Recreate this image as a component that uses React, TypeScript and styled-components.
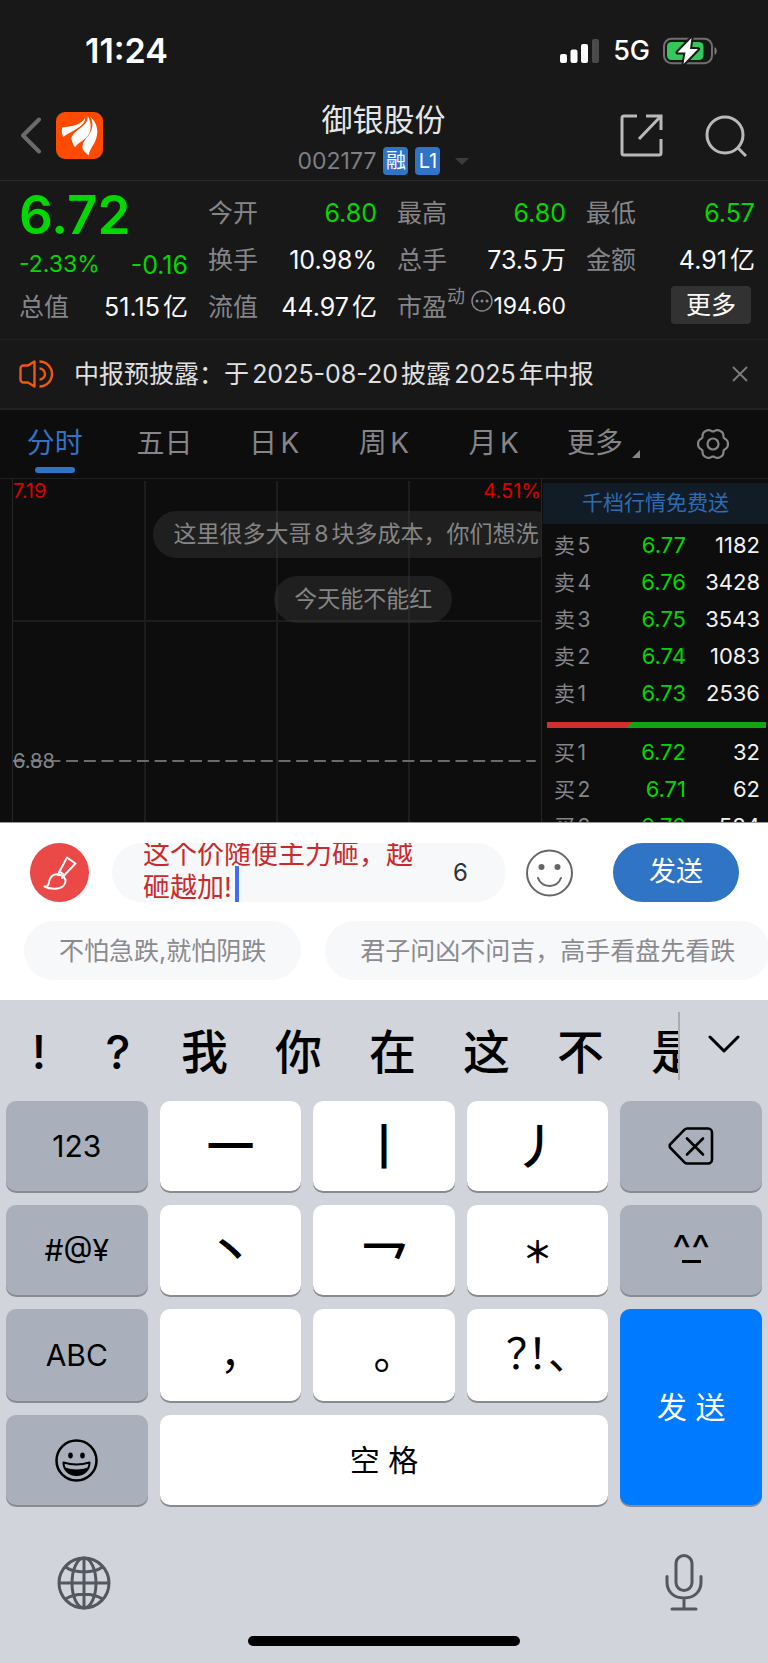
import React, { useState } from "react";
import styled, { createGlobalStyle } from "styled-components";

const GlobalStyle = createGlobalStyle`
  *, *::before, *::after { box-sizing: border-box; }
  body {
    margin: 0;
    background: #0d0d0d;
    font-family: Inter, "Noto Sans CJK SC", sans-serif;
    line-height: 1.2;
    text-autospace: normal;
  }
  button, textarea { font: inherit; color: inherit; border: 0; padding: 0; margin: 0; background: none; }
  button { cursor: pointer; }
  a { color: inherit; text-decoration: none; }
  svg { display: block; flex: none; }
`;

const Screen = styled.div`
  display: flex;
  flex-direction: column;
  min-height: 100vh;
  color: #f2f2f2;
  white-space: nowrap;
`;

/* ---------- status bar ---------- */
const StatusBar = styled.div`
  display: flex;
  align-items: center;
  justify-content: space-between;
  height: 102px;
  padding: 0 50px 0 85px;
  background: #181818;
  color: #fff;
`;
const Clock = styled.time`
  font-size: 34px;
  font-weight: 600;
`;
const StatusIcons = styled.div`
  display: flex;
  align-items: center;
  gap: 13px;
  font-size: 27px;
  font-weight: 500;
`;

/* ---------- navigation ---------- */
const Nav = styled.header`
  display: grid;
  grid-template-columns: 1fr auto 1fr;
  padding: 0 21px 5px 20px;
  background: #181818;
  border-bottom: 1px solid #2a2a2a;
`;
const NavSide = styled.div<{ $end?: boolean }>`
  display: flex;
  align-items: center;
  justify-content: ${(p) => (p.$end ? "flex-end" : "flex-start")};
  gap: ${(p) => (p.$end ? 42 : 14)}px;
  height: 67px;
`;
const TitleBlock = styled.div`
  display: flex;
  flex-direction: column;
  align-items: center;
  gap: 9px;
`;
const StockName = styled.h1`
  margin: 0;
  font-size: 31px;
  line-height: 36px;
  font-weight: 400;
  color: #e6e6e6;
`;
const CodeLine = styled.div`
  display: flex;
  align-items: center;
  gap: 7px;
  font-size: 23px;
  line-height: 28px;
  color: #7f7f85;
`;
const Badge = styled.span`
  display: grid;
  place-items: center;
  width: 25px;
  height: 28px;
  border-radius: 4px;
  background: #2f74c5;
  color: #fff;
  font-size: 20px;
`;
const Caret = styled.i`
  margin-left: 8px;
  border: 7px solid transparent;
  border-top-color: #3c3c3c;
  border-bottom: 0;
`;

/* ---------- key figures ---------- */
const Figures = styled.section`
  display: grid;
  grid-template-columns: repeat(4, 1fr);
  grid-auto-rows: 47px;
  column-gap: 20px;
  padding: 8px 13px 9px 19px;
  background: #181818;
  border-bottom: 1px solid #222;
`;
const Figure = styled.div`
  display: flex;
  align-items: center;
  justify-content: space-between;
  font-size: 25px;
  color: #fafafa;
`;
const FigureLabel = styled.span`
  display: flex;
  align-items: center;
  color: #85858a;
`;
const Sup = styled.sup`
  align-self: flex-start;
  font-size: 18px;
  line-height: 10px;
`;
const Hint = styled.button`
  align-self: flex-start;
  margin: 7px 0 0 auto;
`;
const Down = styled.span`
  color: #00d800;
`;
const Price = styled.strong`
  padding-top: 4px;
  font-size: 53px;
  font-weight: 600;
  line-height: 54px;
  color: #00d800;
`;
const ChangeRow = styled(Figure)`
  padding-top: 11px;
  color: #00d800;
`;
const Percent = styled.span`
  font-size: 23px;
`;
const MoreButton = styled.button`
  width: 80px;
  height: 38px;
  margin: 0 4px 4px auto;
  border-radius: 4px;
  background: #323232;
  font-size: 25px;
  line-height: 38px;
`;

/* ---------- notice ---------- */
const Notice = styled.div`
  display: flex;
  align-items: center;
  height: 70px;
  padding: 0 20px 0 19px;
  background: #181818;
  border-bottom: 2px solid #222;
  font-size: 25px;
  color: #e0e0e0;
`;
const NoticeText = styled.span`
  flex: 1;
  padding-left: 20px;
`;

/* ---------- tabs ---------- */
const Tabs = styled.nav`
  display: grid;
  grid-template-columns: repeat(7, 1fr);
  height: 69px;
  border-bottom: 1px solid #1f1f1f;
  background: #0d0d0d;
`;
const Tab = styled.button<{ $active?: boolean }>`
  position: relative;
  display: flex;
  align-items: center;
  justify-content: center;
  font-size: 28px;
  color: ${(p) => (p.$active ? "#2f74c5" : "#85858a")};
  &::after {
    content: "";
    position: absolute;
    bottom: 5px;
    width: 40px;
    height: 6px;
    border-radius: 3px;
    background: ${(p) => (p.$active ? "#2f74c5" : "transparent")};
  }
`;
const Corner = styled.i`
  align-self: flex-end;
  margin: 0 0 20px 9px;
  border: 4px solid #85858a;
  border-top-color: transparent;
  border-left-color: transparent;
`;

/* ---------- chart and order book ---------- */
const Market = styled.main`
  display: grid;
  grid-template-columns: 542fr 226fr;
  flex: 1 1 0;
  min-height: 320px;
  height: 0;
  overflow: hidden;
  background: #0d0d0d;
`;
const Chart = styled.section`
  position: relative;
  margin-left: 12px;
  overflow: hidden;
  border-left: 1px solid #262626;
  border-right: 1px solid #262626;
`;
const Plot = styled.svg`
  position: absolute;
  inset: 0;
  width: 100%;
  height: 100%;
`;
const AxisLabel = styled.span<{ $top: number; $right?: boolean; $up?: boolean }>`
  position: absolute;
  top: ${(p) => p.$top}px;
  ${(p) => (p.$right ? "right: 0;" : "left: 0;")}
  font-size: 20px;
  line-height: 24px;
  color: ${(p) => (p.$up ? "#de0000" : "#85858a")};
`;
const Bullets = styled.div`
  position: absolute;
  inset: 32px 0 auto 0;
  display: flex;
  flex-direction: column;
  align-items: flex-start;
  gap: 18px;
`;
const Bullet = styled.p<{ $indent: number }>`
  margin: 0 0 0 ${(p) => p.$indent}%;
  padding: 0 20px;
  border-radius: 24px;
  background: rgba(60, 60, 60, 0.4);
  font-size: 23px;
  line-height: 47px;
  color: #858585;
`;
const Book = styled.aside`
  padding: 4px 0 0 1px;
  overflow: hidden;
`;
const Promo = styled.a`
  display: block;
  margin-bottom: 3px;
  padding-bottom: 2px;
  background: #121c27;
  color: #2e6bb3;
  font-size: 21px;
  line-height: 39px;
  text-align: center;
`;
const Depth = styled.table`
  width: 100%;
  border-collapse: collapse;
  font-size: 22px;
  line-height: 37px;
`;
const Level = styled.th`
  width: 50px;
  padding: 0 0 0 11px;
  font-size: 21px;
  font-weight: 400;
  text-align: left;
  color: #85858a;
`;
const PriceCell = styled.td`
  padding: 0;
  text-align: right;
  color: #00d800;
`;
const Volume = styled.td`
  width: 82px;
  padding: 0 8px 0 0;
  text-align: right;
`;
const Balance = styled.div`
  height: 6px;
  margin: 10px 2px 6px 4px;
  background: linear-gradient(135deg, #cf2f2f 38%, #14a514 38%);
`;

/* ---------- comment composer ---------- */
const Composer = styled.section`
  padding: 20px 0;
  border-top: 1px solid #999;
  background: #fff;
`;
const ComposeRow = styled.form`
  display: flex;
  align-items: center;
  padding: 0 29px 0 30px;
`;
const BrushButton = styled.button`
  display: grid;
  place-items: center;
  width: 59px;
  height: 59px;
  border-radius: 50%;
  background: #eb4848;
`;
const Field = styled.div`
  position: relative;
  display: flex;
  align-items: flex-end;
  flex: 1;
  height: 59px;
  margin: 0 20px 0 23px;
  padding: 0 38px 0 31px;
  border-radius: 30px;
  background: #f7f8fa;
  overflow: hidden;
`;
const CommentInput = styled.textarea`
  flex: 1;
  min-width: 0;
  height: 64px;
  padding-right: 30px;
  font-size: 27px;
  line-height: 33px;
  color: #cc2a2a;
  resize: none;
  outline: 0;
  overflow: hidden;
  white-space: pre-wrap;
`;
const TextCaret = styled.i`
  position: absolute;
  left: 123px;
  bottom: 0;
  width: 4px;
  height: 36px;
  background: #3f6ff0;
`;
const Counter = styled.output`
  font-size: 24px;
  line-height: 59px;
  color: #333;
`;
const SendButton = styled.button`
  width: 126px;
  height: 59px;
  margin-left: 40px;
  border-radius: 30px;
  background: #2f74c5;
  color: #fff;
  font-size: 27px;
`;
const Phrases = styled.div`
  display: flex;
  gap: 24px;
  margin-top: 19px;
  padding-left: 24px;
  overflow: hidden;
`;
const Phrase = styled.button`
  flex: none;
  height: 59px;
  padding: 0 35px;
  border-radius: 30px;
  background: #f7f8fa;
  color: #8a8a8f;
  font-size: 25px;
`;

/* ---------- keyboard ---------- */
const Keyboard = styled.section`
  padding: 0 6px 17px;
  background: #d1d4db;
  color: #000;
`;
const CandidateBar = styled.div`
  display: flex;
  align-items: flex-start;
  height: 101px;
  margin: 0 -6px;
  padding-top: 12px;
`;
const Candidates = styled.div`
  display: flex;
  flex: 1;
  padding-top: 6px;
  overflow: hidden;
`;
const Candidate = styled.button`
  flex: none;
  min-width: 79px;
  padding: 0 24px 0 23px;
  font-size: 47px;
  font-weight: 500;
  line-height: 68px;
`;
const Expand = styled.button`
  display: grid;
  justify-content: center;
  align-content: center;
  width: 90px;
  height: 68px;
  padding-bottom: 4px;
  border-left: 2px solid #a9abb1;
`;
const Keys = styled.div`
  display: grid;
  grid-template-columns: repeat(5, 1fr);
  grid-template-rows: 90px 90px 92px 90px;
  gap: 14px 12px;
`;
type KeyKind = "plain" | "grey" | "blue";
const keyFill: Record<KeyKind, string> = { plain: "#fff", grey: "#a9afbb", blue: "#007aff" };
const Key = styled.button<{ $kind?: KeyKind; $cols?: number; $rows?: number }>`
  display: flex;
  flex-direction: column;
  align-items: center;
  justify-content: center;
  grid-column: span ${(p) => p.$cols ?? 1};
  grid-row: span ${(p) => p.$rows ?? 1};
  border-radius: 10px;
  background: ${(p) => keyFill[p.$kind ?? "plain"]};
  box-shadow: 0 2px 0 #898b90;
  color: ${(p) => (p.$kind === "blue" ? "#fff" : "#000")};
  font-size: 30px;
`;
const StrokeKey = styled(Key)<{ $low?: boolean }>`
  padding: ${(p) => (p.$low ? "20px 0 0" : "0 0 6px")};
  font-family: "Noto Sans CJK SC", sans-serif;
  font-size: 48px;
  font-weight: 500;
  line-height: 60px;
`;
const StarKey = styled(Key)`
  font-family: "Noto Sans CJK SC", sans-serif;
  font-weight: 700;
`;
const PunctKey = styled(Key)`
  padding-bottom: 8px;
  font-family: "Noto Sans CJK SC", sans-serif;
  font-feature-settings: "halt";
  font-size: 42px;
  line-height: 60px;
`;
const FaceKey = styled(Key)`
  font-size: 40px;
  line-height: 22px;
  &::after {
    content: "";
    width: 19px;
    height: 3px;
    background: #000;
  }
`;
const BottomRow = styled.div`
  display: flex;
  align-items: center;
  justify-content: space-between;
  padding: 49px 59px 0 51px;
`;
const HomeBar = styled.div`
  width: 36%;
  height: 10px;
  margin: 25px auto 0;
  border-radius: 5px;
  background: #000;
`;

/* ---------- icons ---------- */
const Signal = () => (
  <svg width="40" height="24" viewBox="0 0 40 24" fill="#fff" aria-label="信号">
    <rect x="0" y="15" width="7" height="9" rx="2" />
    <rect x="10.5" y="10.5" width="7" height="13.5" rx="2" />
    <rect x="21" y="5" width="7" height="19" rx="2" />
    <rect x="32" y="0" width="7" height="24" rx="2" fill="#4a4a4a" />
  </svg>
);
const Battery = () => (
  <svg width="55" height="28" viewBox="0 0 55 28" aria-label="充电中">
    <rect x="1" y="1.8" width="48" height="24.4" rx="7.5" fill="none" stroke="#6f6f6f" strokeWidth="2" />
    <path d="M51.5 10v8c3-1.200 3-6.800 0-8z" fill="#7c7c7c" />
    <rect x="4" y="5" width="36.500" height="18" rx="4.500" fill="#34c759" />
    <path d="M28.500 1 14.500 15.500h8L20.500 27l14.500-15h-8z" fill="#fff" stroke="#181818" strokeWidth="4" strokeLinejoin="round" paintOrder="stroke" />
  </svg>
);
const Back = () => (
  <svg width="22" height="37" viewBox="0 0 22 37" fill="none" stroke="#6b6b6b" strokeWidth="4" strokeLinecap="round" strokeLinejoin="round">
    <path d="M19 2.500 3 18.500l16 16" />
  </svg>
);
const Logo = () => (
  <svg width="47" height="47" viewBox="0 0 141 141" fill="#fff">
    <rect width="141" height="141" rx="27" fill="#ff4a00" />
    <path d="M19 46C48 45 78 38 88 16C88 42 60 50 22 74C17 67 16 56 19 46Z" />
    <path d="M95 12C97 45 55 50 46 79C48 90 52 99 57 106C70 86 103 82 104 45C104 32 101 21 95 12Z" />
    <path d="M103 14C113 32 111 52 97 71C84 86 78 95 80 111C85 119 91 125 98 130C101 107 124 93 124 58C123 38 115 25 103 14Z" />
  </svg>
);
const Share = () => (
  <svg width="43" height="43" viewBox="0 0 43 43" fill="none" stroke="#b9b9b9" strokeWidth="3">
    <path d="M17 2H4a2 2 0 0 0-2 2v35a2 2 0 0 0 2 2h35a2 2 0 0 0 2-2V25M26 2h15v14M41 2 19 25" />
  </svg>
);
const Search = () => (
  <svg width="42" height="42" viewBox="0 0 42 42" fill="none" stroke="#b9b9b9" strokeWidth="3">
    <circle cx="20" cy="20" r="18" />
    <path d="m32 32 9 9" />
  </svg>
);
const Ellipsis = () => (
  <svg width="22" height="22" viewBox="0 0 22 22" fill="#85858a">
    <circle cx="11" cy="11" r="10" fill="none" stroke="#85858a" strokeWidth="1.500" />
    <circle cx="6" cy="11" r="1.500" /><circle cx="11" cy="11" r="1.500" /><circle cx="16" cy="11" r="1.500" />
  </svg>
);
const Speaker = () => (
  <svg width="35" height="30" viewBox="0 0 35 30" fill="none" stroke="#ee5a0c" strokeWidth="2.400" strokeLinejoin="round">
    <path d="M15.500 2.500v25l-6.500-4H4.500a3 3 0 0 1-3-3v-11a3 3 0 0 1 3-3H9z" />
    <path d="M20.500 2.500a12.500 12.500 0 0 1 0 25M20.500 9.500a5.500 5.500 0 0 1 0 11" />
  </svg>
);
const Close = () => (
  <svg width="16" height="16" viewBox="0 0 16 16" stroke="#7d7d7d" strokeWidth="1.800">
    <path d="m1 1 14 14M15 1 1 15" />
  </svg>
);
const gearOutline =
  Array.from({ length: 120 }, (_, i) => {
    const a = (i * Math.PI) / 60;
    const r = 14 + 1.2 * Math.cos(6 * a) - 0.3 * Math.cos(12 * a);
    return `${i ? "L" : "M"}${(17 + r * Math.cos(a)).toFixed(2)} ${(17 + r * Math.sin(a)).toFixed(2)}`;
  }).join("") + "Z";
const Gear = () => (
  <svg width="34" height="34" viewBox="0 0 34 34" fill="none" stroke="#85858a" strokeWidth="2.200">
    <path d={gearOutline} strokeLinejoin="round" />
    <circle cx="17" cy="17" r="5.500" />
  </svg>
);
const Brush = () => (
  <svg width="34" height="34" viewBox="0 0 34 34" fill="none" stroke="#fff" strokeWidth="2" strokeLinejoin="round" strokeLinecap="round">
    <path d="M24 1.500 32.500 7.500 21.500 19 16.500 15.500z" />
    <path d="M16.500 15.500 15 19M21.500 19l-2.500 3" />
    <path d="M15 18.500c-6-1-8.500 4-9 8-.3 2.500-1.500 4-4.500 4 7 3.500 20 3.500 21-5 .3-3.500-3-6.500-7.500-7z" />
  </svg>
);
const Smile = () => (
  <svg width="47" height="48" viewBox="0 0 47 48" fill="none" stroke="#666" strokeWidth="2">
    <circle cx="23.500" cy="24" r="22.500" />
    <path d="M12 29c4 10.500 19 10.500 23 0" strokeLinecap="round" />
    <circle cx="15.500" cy="18" r="3" fill="#666" stroke="none" />
    <circle cx="31.500" cy="18" r="3" fill="#666" stroke="none" />
  </svg>
);
const ChevronDown = () => (
  <svg width="32" height="18" viewBox="0 0 32 18" fill="none" stroke="#000" strokeWidth="3" strokeLinecap="round" strokeLinejoin="round">
    <path d="m2 2 14 14L30 2" />
  </svg>
);
const Backspace = () => (
  <svg width="46" height="38" viewBox="0 0 46 38" fill="none" stroke="#000" strokeWidth="2.600" strokeLinecap="round" strokeLinejoin="round">
    <path d="M19.500 1.500H40a4 4 0 0 1 4 4v27a4 4 0 0 1-4 4H19.500a4 4 0 0 1-3-1.200L2.500 21a2.800 2.800 0 0 1 0-4L16.500 2.700a4 4 0 0 1 3-1.200z" />
    <path d="m19 11.500 16 16M35 11.500l-16 16" />
  </svg>
);
const Grin = () => (
  <svg width="43" height="43" viewBox="0 0 43 43" fill="none" stroke="#000" strokeWidth="2.500">
    <circle cx="21.500" cy="21.500" r="20" />
    <ellipse cx="15.500" cy="16.500" rx="2.300" ry="3" fill="#000" stroke="none" />
    <ellipse cx="27.500" cy="16.500" rx="2.300" ry="3" fill="#000" stroke="none" />
    <path d="M8.500 23.500c8 2.500 18 2.500 26 0 0 7-5 12.500-13 12.500S8.500 30.500 8.500 23.500z" strokeWidth="2" strokeLinejoin="round" />
    <path d="M10 28.500c7 2.500 16 2.500 23 0-2 5-6 7.500-11.500 7.500S12 33.500 10 28.500z" fill="#000" stroke="none" />
  </svg>
);
const Globe = () => (
  <svg width="54" height="54" viewBox="0 0 54 54" fill="none" stroke="#53575f" strokeWidth="3">
    <circle cx="27" cy="27" r="25" />
    <ellipse cx="27" cy="27" rx="12" ry="25" />
    <path d="M27 2v50M2 27h50M8.500 11c9 6.500 28 6.500 37 0M8.500 43c9-6.500 28-6.500 37 0" />
  </svg>
);
const Mic = () => (
  <svg width="38" height="57" viewBox="0 0 38 57" fill="none" stroke="#53575f" strokeWidth="3" strokeLinecap="round">
    <rect x="11" y="1.500" width="16" height="35" rx="8" />
    <path d="M2 22.500v5.500c0 10 7 16 17 16s17-6 17-16v-5.500M19 44v11M7 55h24" />
  </svg>
);

/* ---------- data ---------- */
const asks = [
  ["卖5", "6.77", "1182"],
  ["卖4", "6.76", "3428"],
  ["卖3", "6.75", "3543"],
  ["卖2", "6.74", "1083"],
  ["卖1", "6.73", "2536"],
];
const bids = [
  ["买1", "6.72", "32"],
  ["买2", "6.71", "62"],
  ["买3", "6.70", "584"],
];

const DepthTable = ({ rows, label }: { rows: string[][]; label: string }) => (
  <Depth aria-label={label}>
    <tbody>
      {rows.map(([level, price, volume]) => (
        <tr key={level}>
          <Level scope="row">{level}</Level>
          <PriceCell>{price}</PriceCell>
          <Volume>{volume}</Volume>
        </tr>
      ))}
    </tbody>
  </Depth>
);

const Stat = ({ label, value, down }: { label: string; value: string; down?: boolean }) => (
  <Figure>
    <FigureLabel>{label}</FigureLabel>
    {down ? <Down>{value}</Down> : <span>{value}</span>}
  </Figure>
);

export default function App() {
  const [comment, setComment] = useState("这个价随便主力砸，越砸越加!");
  return (
    <Screen>
      <GlobalStyle />
      <StatusBar>
        <Clock>11:24</Clock>
        <StatusIcons>
          <Signal />
          <span>5G</span>
          <Battery />
        </StatusIcons>
      </StatusBar>

      <Nav>
        <NavSide>
          <button aria-label="返回"><Back /></button>
          <Logo />
        </NavSide>
        <TitleBlock>
          <StockName>御银股份</StockName>
          <CodeLine>
            <span>002177</span>
            <Badge>融</Badge>
            <Badge>L1</Badge>
            <Caret />
          </CodeLine>
        </TitleBlock>
        <NavSide $end>
          <button aria-label="分享"><Share /></button>
          <button aria-label="搜索"><Search /></button>
        </NavSide>
      </Nav>

      <Figures>
        <Figure><Price>6.72</Price></Figure>
        <Stat label="今开" value="6.80" down />
        <Stat label="最高" value="6.80" down />
        <Stat label="最低" value="6.57" down />
        <ChangeRow><Percent>-2.33%</Percent><span>-0.16</span></ChangeRow>
        <Stat label="换手" value="10.98%" />
        <Stat label="总手" value="73.5万" />
        <Stat label="金额" value="4.91亿" />
        <Stat label="总值" value="51.15亿" />
        <Stat label="流值" value="44.97亿" />
        <Figure>
          <FigureLabel>市盈<Sup>动</Sup></FigureLabel>
          <Hint aria-label="市盈率说明"><Ellipsis /></Hint>
          <Percent>194.60</Percent>
        </Figure>
        <Figure><MoreButton>更多</MoreButton></Figure>
      </Figures>

      <Notice>
        <Speaker />
        <NoticeText>中报预披露：于2025-08-20披露2025年中报</NoticeText>
        <button aria-label="关闭"><Close /></button>
      </Notice>

      <Tabs>
        <Tab $active>分时</Tab>
        <Tab>五日</Tab>
        <Tab>日K</Tab>
        <Tab>周K</Tab>
        <Tab>月K</Tab>
        <Tab>更多<Corner /></Tab>
        <Tab aria-label="设置"><Gear /></Tab>
      </Tabs>

      <Market>
        <Chart>
          <Plot>
            <g stroke="#1d1d1d" strokeWidth="2">
              <line x1="25%" x2="25%" y1="2" y2="100%" />
              <line x1="50%" x2="50%" y1="2" y2="100%" />
              <line x1="75%" x2="75%" y1="2" y2="100%" />
              <line x1="0" x2="100%" y1="142" y2="142" />
            </g>
            <line x1="0" x2="99%" y1="282" y2="282" stroke="#6b6b6f" strokeWidth="2" strokeDasharray="12 5.700" />
          </Plot>
          <AxisLabel $top={0} $up>7.19</AxisLabel>
          <AxisLabel $top={0} $right $up>4.51%</AxisLabel>
          <AxisLabel $top={270}>6.88</AxisLabel>
          <Bullets>
            <Bullet $indent={26.6}>这里很多大哥8块多成本，你们想洗</Bullet>
            <Bullet $indent={49.5}>今天能不能红</Bullet>
          </Bullets>
        </Chart>
        <Book>
          <Promo href="#depth">千档行情免费送</Promo>
          <DepthTable rows={asks} label="卖盘" />
          <Balance />
          <DepthTable rows={bids} label="买盘" />
        </Book>
      </Market>

      <Composer>
        <ComposeRow onSubmit={(e) => e.preventDefault()}>
          <BrushButton type="button" aria-label="样式"><Brush /></BrushButton>
          <Field>
            <CommentInput aria-label="评论" value={comment} onChange={(e) => setComment(e.target.value)} />
            <TextCaret />
            <Counter>6</Counter>
          </Field>
          <button type="button" aria-label="表情"><Smile /></button>
          <SendButton>发送</SendButton>
        </ComposeRow>
        <Phrases>
          <Phrase>不怕急跌,就怕阴跌</Phrase>
          <Phrase>君子问凶不问吉，高手看盘先看跌</Phrase>
        </Phrases>
      </Composer>

      <Keyboard>
        <CandidateBar>
          <Candidates>
            {["!", "?", "我", "你", "在", "这", "不", "是"].map((c) => (
              <Candidate key={c}>{c}</Candidate>
            ))}
          </Candidates>
          <Expand aria-label="展开"><ChevronDown /></Expand>
        </CandidateBar>
        <Keys>
          <Key $kind="grey">123</Key>
          <StrokeKey>一</StrokeKey>
          <StrokeKey>丨</StrokeKey>
          <StrokeKey>丿</StrokeKey>
          <Key $kind="grey" aria-label="删除"><Backspace /></Key>
          <Key $kind="grey">#@¥</Key>
          <StrokeKey>丶</StrokeKey>
          <StrokeKey $low>乛</StrokeKey>
          <StarKey>＊</StarKey>
          <FaceKey $kind="grey">^^</FaceKey>
          <Key $kind="grey">ABC</Key>
          <PunctKey>，</PunctKey>
          <PunctKey>。</PunctKey>
          <PunctKey>？！、</PunctKey>
          <Key $kind="blue" $rows={2}>发 送</Key>
          <Key $kind="grey" aria-label="表情键盘"><Grin /></Key>
          <Key $cols={3}>空 格</Key>
        </Keys>
        <BottomRow>
          <button aria-label="切换键盘"><Globe /></button>
          <button aria-label="听写"><Mic /></button>
        </BottomRow>
        <HomeBar />
      </Keyboard>
    </Screen>
  );
}
